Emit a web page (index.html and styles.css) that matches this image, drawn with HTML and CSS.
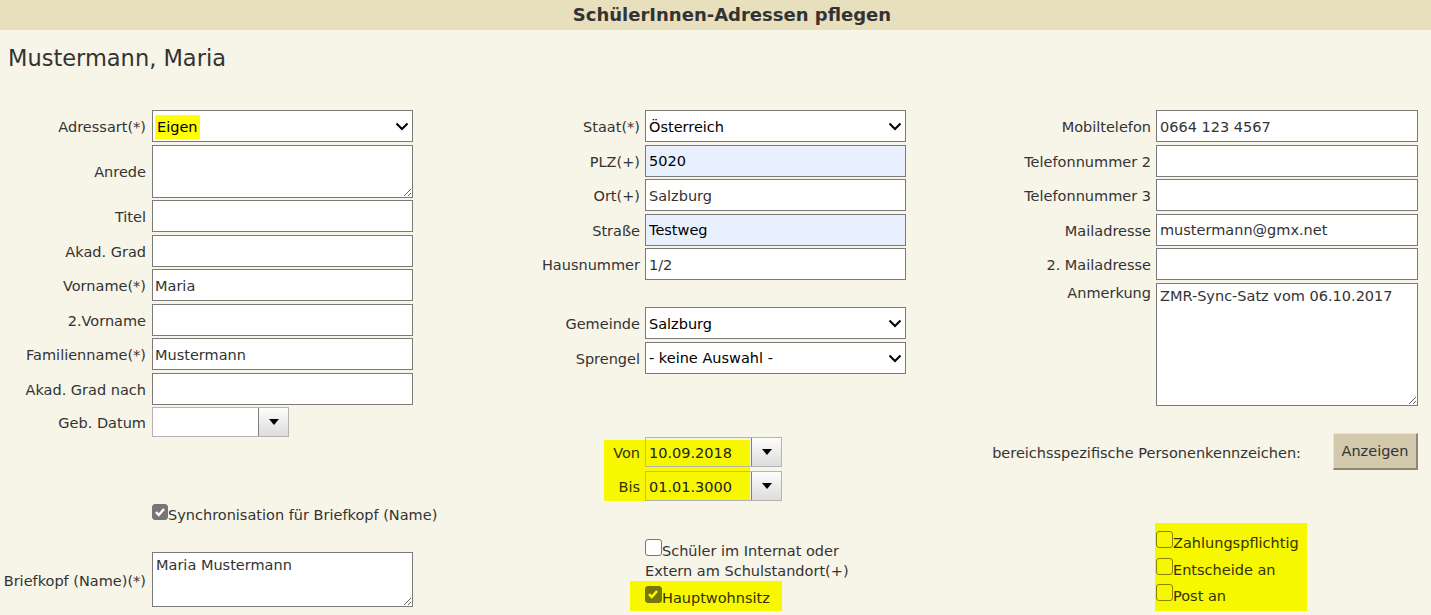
FILE: index.html
```html
<!DOCTYPE html>
<html lang="de">
<head>
    <meta charset="UTF-8">
    <title>SchülerInnen-Adressen pflegen</title>
    <link rel="stylesheet" href="styles.css">
</head>
<body>
<div class="page-title">SchülerInnen-Adressen pflegen</div>
<h1 class="person">Mustermann, Maria</h1>

<div class="form">
    <!-- left column: name data -->
    <div class="col col-1">
        <div class="fields">
            <label>Adressart(*)</label>
            <div class="select"><span class="mark">Eigen</span><svg class="chev" width="14" height="9" viewBox="0 0 14 9"><path d="M1.5 1.5 L7 7 L12.5 1.5"/></svg></div>
            <label>Anrede</label>
            <textarea class="anrede"></textarea>
            <label>Titel</label>
            <input type="text">
            <label>Akad. Grad</label>
            <input type="text">
            <label>Vorname(*)</label>
            <input type="text" value="Maria">
            <label>2.Vorname</label>
            <input type="text">
            <label>Familienname(*)</label>
            <input type="text" value="Mustermann">
            <label>Akad. Grad nach</label>
            <input type="text">
            <label>Geb. Datum</label>
            <div class="date"><input type="text"><span class="date-btn"><i class="tri"></i></span></div>
        </div>

        <label class="check sync"><span class="box small checked grey"><svg width="12" height="12" viewBox="0 0 12 12"><path d="M2 6.2 L4.8 9 L10 3"/></svg></span>Synchronisation für Briefkopf (Name)</label>

        <div class="fields briefkopf">
            <label>Briefkopf (Name)(*)</label>
            <textarea class="note-short">Maria Mustermann</textarea>
        </div>
    </div>

    <!-- middle column: address -->
    <div class="col col-2">
        <div class="fields">
            <label>Staat(*)</label>
            <div class="select"><span>Österreich</span><svg class="chev" width="14" height="9" viewBox="0 0 14 9"><path d="M1.5 1.5 L7 7 L12.5 1.5"/></svg></div>
            <label>PLZ(+)</label>
            <input type="text" class="filled" value="5020">
            <label>Ort(+)</label>
            <input type="text" value="Salzburg">
            <label>Straße</label>
            <input type="text" class="filled" value="Testweg">
            <label>Hausnummer</label>
            <input type="text" value="1/2">
            <div class="spacer"></div>
            <div class="spacer"></div>
            <label>Gemeinde</label>
            <div class="select"><span>Salzburg</span><svg class="chev" width="14" height="9" viewBox="0 0 14 9"><path d="M1.5 1.5 L7 7 L12.5 1.5"/></svg></div>
            <label>Sprengel</label>
            <div class="select"><span>- keine Auswahl -</span><svg class="chev" width="14" height="9" viewBox="0 0 14 9"><path d="M1.5 1.5 L7 7 L12.5 1.5"/></svg></div>
        </div>

        <div class="fields period">
            <label>Von</label>
            <div class="date"><input type="text" value="10.09.2018"><span class="date-btn"><i class="tri"></i></span></div>
            <label>Bis</label>
            <div class="date"><input type="text" value="01.01.3000"><span class="date-btn"><i class="tri"></i></span></div>
        </div>

        <div class="flags">
            <label class="check"><span class="box"></span>Schüler im Internat oder<br>Extern am Schulstandort(+)</label>
            <div class="hl-row">
                <label class="check"><span class="box checked olive"><svg width="12" height="12" viewBox="0 0 12 12"><path d="M2 6.2 L4.8 9 L10 3"/></svg></span>Hauptwohnsitz</label>
            </div>
        </div>
    </div>

    <!-- right column: contact -->
    <div class="col col-3">
        <div class="fields">
            <label>Mobiltelefon</label>
            <input type="text" value="0664 123 4567">
            <label>Telefonnummer 2</label>
            <input type="text">
            <label>Telefonnummer 3</label>
            <input type="text">
            <label>Mailadresse</label>
            <input type="text" value="mustermann@gmx.net">
            <label>2. Mailadresse</label>
            <input type="text">
            <label class="top">Anmerkung</label>
            <textarea class="note">ZMR-Sync-Satz vom 06.10.2017</textarea>
        </div>

        <div class="bpk">
            <span>bereichsspezifische Personenkennzeichen:</span>
            <button type="button">Anzeigen</button>
        </div>

        <div class="hl-box">
            <label class="check"><span class="box yellow"></span>Zahlungspflichtig</label>
            <label class="check"><span class="box yellow"></span>Entscheide an</label>
            <label class="check"><span class="box yellow"></span>Post an</label>
        </div>
    </div>
</div>
</body>
</html>
```

FILE: styles.css
```css
* {
    box-sizing: border-box;
}

body {
    margin: 0;
    background-color: #f7f4e8;
    font-family: "DejaVu Sans", Verdana, sans-serif;
    font-size: 14.5px;
    color: #333;
}

.page-title {
    height: 30px;
    line-height: 30px;
    padding-left: 33px;
    background-color: #e8dfbd;
    text-align: center;
    font-size: 18px;
    font-weight: bold;
}

.person {
    margin: 15px 0 0 8px;
    font-size: 22.5px;
    font-weight: normal;
    line-height: 27px;
}

.form {
    display: flex;
    margin-top: 38px;
}

.col {
    display: flex;
    flex-direction: column;
}

.col-1 {
    width: 413px;
}

.col-2 {
    width: 493px;
}

.col-3 {
    width: 512px;
}

/* label + field grid */
.fields {
    display: grid;
    row-gap: 2.5px;
    align-items: center;
}

.col-1 .fields {
    grid-template-columns: 146px 261px;
    column-gap: 6px;
}

.col-2 .fields {
    grid-template-columns: 227px 261px;
    column-gap: 5px;
}

.col-3 .fields {
    grid-template-columns: 245px 262px;
    column-gap: 5px;
}

.fields label {
    text-align: right;
    white-space: nowrap;
    line-height: 17px;
    padding-top: 3px;
}

.fields label.top {
    align-self: start;
    padding-top: 2px;
}

.spacer {
    height: 22px;
}

input,
textarea,
.select {
    font: inherit;
    color: #333;
    height: 32px;
    margin: 0;
    padding: 1px 3px 0;
    border: 1px solid #7a7a7a;
    border-radius: 0;
    background-color: #fff;
    outline: none;
}

.col-1 input,
.col-1 .select {
    padding-left: 2px;
}

input.filled {
    background-color: #e8f0fe;
    color: #000;
}

textarea {
    display: block;
    padding: 4px 3px;
    line-height: 17px;
}

textarea.anrede {
    height: 53px;
}

textarea.note {
    height: 123.5px;
}

textarea.note-short {
    height: 55px;
}

.select {
    display: flex;
    align-items: center;
    justify-content: space-between;
    color: #000;
    padding-right: 3px;
}

.select .mark {
    background-color: #ffff00;
    line-height: 24px;
    padding: 0 2px;
}

.chev path {
    fill: none;
    stroke: #000;
    stroke-width: 2;
}

/* date picker */
.date {
    display: flex;
    width: 137px;
    height: 30px;
    border: 1px solid #b4b4b4;
    background-color: #fff;
}

.date input {
    width: 105px;
    height: 28px;
    border: none;
    background: transparent;
    color: #222;
    padding-left: 3px;
}

.date-btn {
    display: flex;
    align-items: center;
    justify-content: center;
    width: 30px;
    border-left: 1px solid #7e7e7e;
    background: linear-gradient(#fdfdfd, #dcdcdc);
}

.tri {
    width: 0;
    height: 0;
    border-left: 5px solid transparent;
    border-right: 5px solid transparent;
    border-top: 6px solid #000;
}

.period {
    margin-top: 63.5px;
    row-gap: 4px !important;
    background: linear-gradient(#f7f700, #f7f700) no-repeat 191px 3px / 146px 62px;
}

.period .date {
    background-color: transparent;
}

.period label {
    color: #333300;
}

/* checkboxes */
.check {
    display: block;
    line-height: 20px;
    white-space: nowrap;
}

.box {
    display: inline-block;
    width: 17px;
    height: 17px;
    border: 1px solid #767676;
    border-radius: 3px;
    background-color: #fff;
    vertical-align: baseline;
    position: relative;
}

.box.small {
    width: 16px;
    height: 16px;
}

.box svg {
    position: absolute;
    left: 1px;
    top: 1px;
}

.box svg path {
    fill: none;
    stroke-width: 2.4;
}

.box.grey {
    background-color: #767676;
    border-color: #767676;
}

.box.grey path {
    stroke: #fff;
}

.box.olive {
    background-color: #76760a;
    border-color: #76760a;
}

.box.olive path {
    stroke: #ffff00;
}

.box.yellow {
    background-color: #f7f700;
    border-color: #858500;
}

.sync {
    margin: 67px 0 0 152px;
}

.briefkopf {
    margin-top: 27px;
}

.flags {
    margin: 37.5px 0 0 232px;
}

.hl-row {
    display: inline-block;
    margin-left: -15px;
    padding: 5px 12px 3px 15px;
    background-color: #f7f700;
    color: #333300;
}

.bpk {
    display: flex;
    align-items: center;
    justify-content: flex-end;
    gap: 32px;
    margin-top: 27px;
}

.bpk span {
    padding-top: 2px;
}

.bpk button {
    width: 85px;
    height: 37px;
    font: inherit;
    color: #333;
    background-color: #d3c9ad;
    border-style: solid;
    border-width: 1px 2px 2px 1px;
    border-color: #ebe4cf #8d8775 #8d8775 #ebe4cf;
    padding: 0;
}

.hl-box {
    align-self: flex-start;
    margin: 53px 0 0 249px;
    padding: 7px 8px 1.5px 1px;
    background-color: #f7f700;
    color: #333300;
}

.hl-box .check {
    line-height: 26.5px;
}
```
